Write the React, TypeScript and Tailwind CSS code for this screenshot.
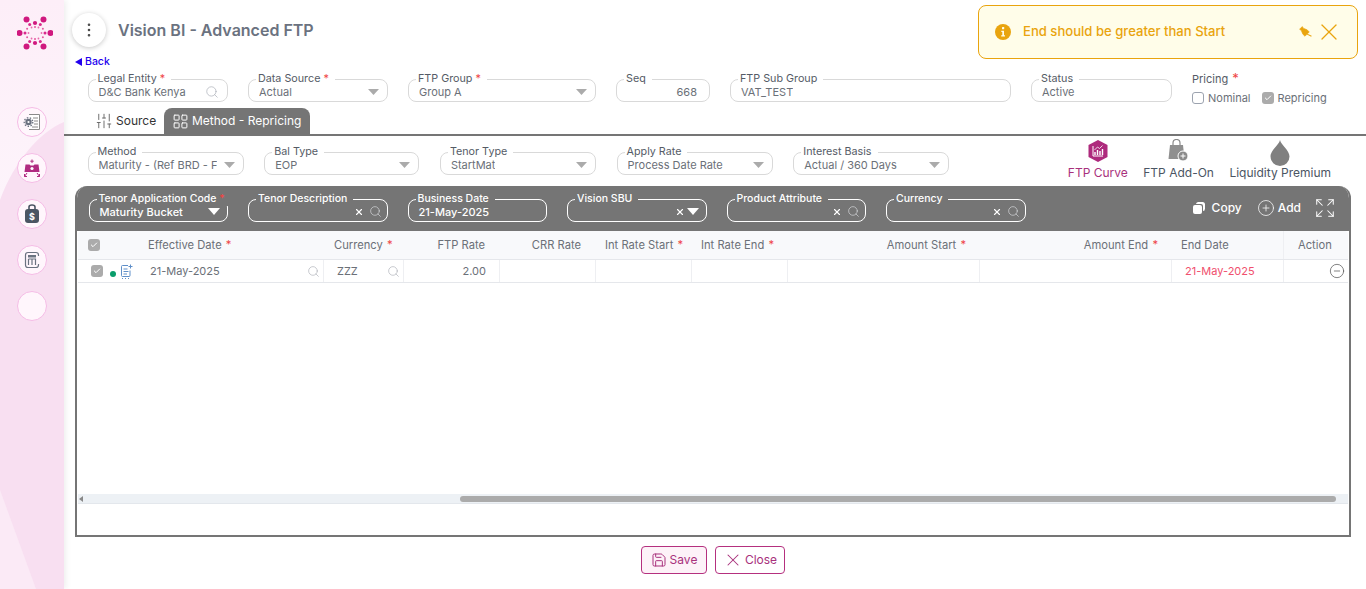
import React from "react";
import { Search, SlidersVertical, LayoutGrid, CirclePlus, Expand, Save, X, EllipsisVertical, CircleMinus, Check } from "lucide-react";

const Tri = ({ c = "#ababab", w = 11, h = 6 }: { c?: string; w?: number; h?: number }) => (
  <svg width={w} height={h} viewBox="0 0 10 5" preserveAspectRatio="none" className="shrink-0"><path d="M0 0h10L5 5z" fill={c} /></svg>
);

const Req = () => <span className="text-[#ef4444]"> *</span>;

function Field({ label, req, value, w, right, align }: { label: string; req?: boolean; value?: string; w: string; right?: React.ReactNode; align?: boolean }) {
  return (
    <fieldset className={`${w} h-[30px] min-w-0 shrink-0 rounded-lg border border-[#d9d9d9] pl-[10px] pr-[5px]`}>
      <legend className="ml-[-3px] pl-[2px] pr-[6px] text-[10.75px] leading-[14px] text-[#555b66] whitespace-nowrap">
        {label}
        {req && <Req />}
      </legend>
      <div className="flex h-[11px] items-center justify-between gap-1">
        <span className={`overflow-hidden whitespace-nowrap text-[11px] leading-[14px] text-[#6b7078] ${align ? "w-full pr-[7px] text-right" : ""}`}>{value}</span>
        {right && <span className="flex items-center pr-[3px]">{right}</span>}
      </div>
    </fieldset>
  );
}

function Filter({ label, req, value, right }: { label: string; req?: boolean; value?: string; right?: React.ReactNode }) {
  return (
    <fieldset className="h-[30px] w-[139.5px] min-w-0 shrink-0 rounded-lg border border-white pl-[10px] pr-[5px]">
      <legend className="ml-[-3px] pl-[2px] pr-[6px] text-[10.5px] font-medium leading-[14px] text-white whitespace-nowrap">
        {label}
        {req && <Req />}
      </legend>
      <div className="flex h-[11px] items-center justify-between">
        <span className="whitespace-nowrap text-[11px] font-medium leading-[14px] text-white">{value}</span>
        {right}
      </div>
    </fieldset>
  );
}

const SearchG = ({ c = "#a3a8b0", s = 13 }: { c?: string; s?: number }) => <Search size={s} color={c} strokeWidth={1.1} className="shrink-0" />;
const Cross = () => <X size={10} color="#fff" strokeWidth={2.75} className="shrink-0" />;

const Box = ({ on }: { on?: boolean }) =>
  on ? (
    <span className="flex h-3 w-3 shrink-0 items-center justify-center rounded-[3px] bg-[#ababab]"><Check size={8} color="#fff" strokeWidth={3} /></span>
  ) : (
    <span className="block h-3 w-3 shrink-0 rounded-[3px] border border-[#9ca3af] bg-white" />
  );

function Logo() {
  const big = [0, 58, 122, 180, 238, 302];
  const mid = [90, 270];
  const items: React.ReactNode[] = [];
  const c = 18;
  const pt = (deg: number, d: number) => [c + Math.cos((deg * Math.PI) / 180) * d, c + Math.sin((deg * Math.PI) / 180) * d];
  big.forEach((a) => {
    const [x, y] = pt(a, a === 0 || a === 180 ? 15.5 : 16);
    items.push(<circle key={"b" + a} cx={x} cy={y} r={3} fill="#d0187f" />);
    const [x2, y2] = pt(a, 10);
    items.push(<circle key={"s" + a} cx={x2} cy={y2} r={1.5} fill="#d92a8c" />);
    const [x3, y3] = pt(a, 6.5);
    items.push(<circle key={"t" + a} cx={x3} cy={y3} r={0.9} fill="#e86aae" />);
  });
  mid.forEach((a) => {
    const [x, y] = pt(a, 10);
    items.push(<circle key={"m" + a} cx={x} cy={y} r={2.1} fill="#d0187f" />);
    const [x2, y2] = pt(a, 6);
    items.push(<circle key={"n" + a} cx={x2} cy={y2} r={1} fill="#e4589f" />);
  });
  [29, 151, 209, 331].forEach((a) => {
    const [x, y] = pt(a, 9);
    items.push(<circle key={"r" + a} cx={x} cy={y} r={1} fill="#e4589f" />);
  });
  return <svg width="36" height="36" viewBox="0 0 36 36">{items}</svg>;
}

const SideBtn = ({ children }: { children?: React.ReactNode }) => (
  <div className="flex h-[30px] w-[30px] items-center justify-center rounded-full border border-[#f5bce6] bg-[#fff6fc]">{children}</div>
);

const icoDoc = (
  <svg width="18" height="18" viewBox="0 0 18 18">
    <path d="M6 1.500h10.500v15H6" fill="#fff" stroke="#8a8a8a" strokeWidth="1" />
    <path d="M10 5h5M11 8h4M11 11h4M9 14h6" stroke="#8a8a8a" strokeWidth="1" />
    <circle cx="5.500" cy="9" r="3.200" fill="#6b7280" />
    <circle cx="5.500" cy="9" r="4.300" fill="none" stroke="#6b7280" strokeWidth="1.300" strokeDasharray="1.500 1.500" />
    <circle cx="5.500" cy="9" r="1.100" fill="#fff" />
  </svg>
);
const icoFlow = (
  <svg width="18" height="19" viewBox="0 0 18 19">
    <path d="M9 0.500v3.500M7.300 2.200h3.400" stroke="#b02a80" strokeWidth="1" />
    <path d="M2.500 5.500h4l1 1h3l1-1h4l1 7.500h-15z" fill="#b02a80" />
    <circle cx="9" cy="9.500" r="1.600" fill="#fff" />
    <path d="M4 14l-2.500 3.500M1.500 15v2.500h2.500M14 14l2.500 3.500M16.500 15v2.500h-2.500" fill="none" stroke="#b02a80" strokeWidth="1" />
  </svg>
);
const icoBag = (
  <svg width="18" height="20" viewBox="0 0 18 20">
    <path d="M6 5V3q0-2 3-2t3 2v2" fill="none" stroke="#4b5563" strokeWidth="1.600" />
    <rect x="2" y="5" width="14" height="14" rx="3" fill="#4b5563" />
    <text x="9" y="15.500" textAnchor="middle" fontSize="9" fontWeight="700" fill="#fff" fontFamily="Inter">$</text>
  </svg>
);
const icoCalc = (
  <svg width="16" height="18" viewBox="0 0 16 18">
    <path d="M14.500 5V4q0-2.500-2.500-2.500H4Q1.500 1.500 1.500 4v10q0 2.500 2.500 2.500h8q2.500 0 2.500-2.500v-1" fill="none" stroke="#6b7280" strokeWidth="1.200" />
    <rect x="4" y="4" width="8" height="2.500" fill="#6b7280" />
    <path d="M4.500 8h7v6M4.500 8v6M8 8v6" fill="none" stroke="#6b7280" strokeWidth="1.200" />
  </svg>
);

function TopIcon({ label, active, children }: { label: string; active?: boolean; children: React.ReactNode }) {
  return (
    <div className="flex flex-col items-center">
      <div className="flex h-[24px] items-end">{children}</div>
      <span className={`mt-[3px] text-[12px] leading-[16px] whitespace-nowrap ${active ? "text-[#a8317c]" : "text-[#4b5563]"}`}>{label}</span>
    </div>
  );
}

const cols = ["w-[62px]", "w-[183px]", "w-[80px]", "w-[96px]", "w-[96px]", "w-[96px]", "w-[96px]", "w-[192px]", "w-[192px]", "w-[112px]", "w-[65px]"];

const HCell = ({ i, label, req, cls, children }: { i: number; label?: string; req?: boolean; cls?: string; children?: React.ReactNode }) => (
  <div className={`${cols[i]} flex shrink-0 items-center whitespace-nowrap text-[11.2px] text-[#6b7078] ${cls ?? ""}`}>
    {children}
    {label}
    {req && <span className="ml-[1px] text-[#ef4444]">&nbsp;*</span>}
  </div>
);

const BCell = ({ i, children, cls }: { i: number; children?: React.ReactNode; cls?: string }) => (
  <div className={`${cols[i]} flex shrink-0 items-center border-l border-[#eeeff2] text-[11px] text-[#6b7078] ${cls ?? ""}`}>{children}</div>
);

export default function App() {
  return (
    <div className="relative flex h-[589px] w-[1366px] overflow-hidden bg-white font-['Inter',sans-serif]">
      <aside className="relative z-10 flex w-[64px] shrink-0 flex-col items-center bg-[#f8dff1] shadow-[2px_0_6px_rgba(0,0,0,0.07)]">
        <svg className="absolute inset-0" width="64" height="589" viewBox="0 0 64 589">
          <defs>
            <linearGradient id="t" x1="0" y1="0" x2="0" y2="1">
              <stop offset="0" stopColor="#fdeef8" />
              <stop offset="1" stopColor="#fdf4fb" />
            </linearGradient>
          </defs>
          <path d="M0 0H64V122C40 132 15 160 0 200Z" fill="url(#t)" />
          <path d="M0 490L36 589H0Z" fill="#fbeaf6" />
        </svg>
        <div className="relative ml-[5px] mt-[15px]"><Logo /></div>
        <div className="relative mt-[56px] flex flex-col gap-[16px]">
          <SideBtn>{icoDoc}</SideBtn>
          <SideBtn>{icoFlow}</SideBtn>
          <SideBtn>{icoBag}</SideBtn>
          <SideBtn>{icoCalc}</SideBtn>
          <SideBtn />
        </div>
      </aside>

      <main className="flex min-w-0 flex-1 flex-col">
        <header className="flex h-[55px] shrink-0 items-center pl-[8px] pt-[5px]">
          <div className="flex h-[34px] w-[34px] items-center justify-center rounded-full bg-white shadow-[0_1px_5px_rgba(0,0,0,0.22)]">
            <EllipsisVertical size={18} color="#444" strokeWidth={1.5} />
          </div>
          <h1 className="ml-[12px] text-[16px] font-semibold text-[#6b7280]">Vision BI - Advanced FTP</h1>
        </header>

        <a className="ml-[11px] flex h-[14px] items-center gap-[3px] text-[10.5px] font-medium leading-[12px] text-[#2200ee]">
          <svg width="7" height="8" viewBox="0 0 7 8"><path d="M7 0v8L0 4z" fill="#2200ee" /></svg>
          Back
        </a>

        <div className="ml-[23.5px] mt-[3px] flex shrink-0 items-start gap-[20px]">
          <Field w="w-[140.5px]" label="Legal Entity" req value="D&C Bank Kenya" right={<SearchG s={14} />} />
          <Field w="w-[140px]" label="Data Source" req value="Actual" right={<Tri />} />
          <Field w="w-[188px]" label="FTP Group" req value="Group A" right={<Tri />} />
          <Field w="w-[94px]" label="Seq" value="668" align />
          <Field w="w-[281px]" label="FTP Sub Group" value="VAT_TEST" />
          <Field w="w-[141px]" label="Status" value="Active" />
          <div className="-mt-[1px] flex h-[34px] flex-col justify-between">
            <div className="text-[11px] leading-[14px] text-[#555b66]">Pricing<span className="ml-[4px] text-[13px] text-[#ef4444]">*</span></div>
            <div className="flex items-center text-[11px] leading-[14px] text-[#6b7078]">
              <Box /><span className="ml-[4px]">Nominal</span>
              <span className="ml-[11px]"><Box on /></span><span className="ml-[4px]">Repricing</span>
            </div>
          </div>
        </div>

        <div className="mt-[3px] flex h-[28px] shrink-0 items-stretch border-b-2 border-[#757575] pl-[31px]">
          <div className="flex w-[62px] items-center gap-[3px] text-[12px] text-[#333]">
            <SlidersVertical size={18} color="#666" strokeWidth={1.25} />
            Source
          </div>
          <div className="ml-[7px] flex w-[146px] items-center gap-[3px] rounded-t-lg bg-[#757575] pl-[8px] text-[12px] text-white">
            <LayoutGrid size={17} color="#fff" strokeWidth={1.4} />
            Method - Repricing
          </div>
        </div>

        <div className="relative flex h-[50px] shrink-0 items-start pl-[23.5px] pr-[35px]">
          <div className="mt-[9px] flex gap-[20.7px]">
            <Field w="w-[156px]" label="Method" value="Maturity - (Ref BRD - F" right={<Tri />} />
            <Field w="w-[155px]" label="Bal Type" value="EOP" right={<Tri />} />
            <Field w="w-[156px]" label="Tenor Type" value="StartMat" right={<Tri />} />
            <Field w="w-[156px]" label="Apply Rate" value="Process Date Rate" right={<Tri />} />
            <Field w="w-[156px]" label="Interest Basis" value="Actual / 360 Days" right={<Tri />} />
          </div>
          <div className="ml-auto mt-[2px] flex gap-[15.5px]">
            <TopIcon label="FTP Curve" active>
              <svg width="20" height="22" viewBox="0 0 20 22">
                <path d="M10 0l9.500 5v12L10 22 .5 17V5z" fill="#ae2a7d" />
                <path d="M5 6v10h10" fill="none" stroke="#fff" strokeWidth="1" />
                <path d="M7 15v-3M9.500 15v-5M12 15v-4M14.500 15v-6" stroke="#fff" strokeWidth="1.400" />
                <path d="M6.500 10l3-3 2 1.500 3-3" fill="none" stroke="#fff" strokeWidth=".8" />
              </svg>
            </TopIcon>
            <TopIcon label="FTP Add-On">
              <svg width="21" height="23" viewBox="0 0 21 23">
                <path d="M5 8V4q0-3.500 3.500-3.500T12 4v4" fill="none" stroke="#8a8a8a" strokeWidth="1.200" />
                <path d="M2 6h13l1.500 14H0.500z" fill="#8f8f8f" />
                <circle cx="15" cy="17" r="5" fill="#8a8a8a" stroke="#fff" strokeWidth="1" />
                <path d="M12.500 17h5M15 14.500v5" stroke="#fff" strokeWidth="1" />
              </svg>
            </TopIcon>
            <TopIcon label="Liquidity Premium">
              <svg width="20" height="26" viewBox="0 0 20 26" className="-mb-[4px]">
                <path d="M10 0c1 5 9.500 10 9.500 16.500a9.500 9.500 0 0 1-19 0C.5 10 9 5 10 0z" fill="#808080" />
              </svg>
            </TopIcon>
          </div>
        </div>

        <section className="ml-[11px] mr-[15px] flex h-[351px] shrink-0 flex-col overflow-hidden rounded-t-[12px] border-2 border-t-0 border-[#757575] bg-white">
          <div className="flex h-[45px] shrink-0 items-start bg-[#757575] pl-[11.5px] pr-[13px]">
            <div className="mt-[6px] flex gap-[20px]">
              <Filter label="Tenor Application Code" req value="Maturity Bucket" right={<span className="pr-[2px]"><Tri c="#fff" w={12} h={7} /></span>} />
              <Filter label="Tenor Description" right={<span className="flex items-center gap-[5px]"><Cross /><SearchG c="#e5e7eb" /></span>} />
              <Filter label="Business Date" value="21-May-2025" />
              <Filter label="Vision SBU" right={<span className="flex items-center gap-[2px] pr-[2px]"><Cross /><Tri c="#fff" w={12} h={7} /></span>} />
              <Filter label="Product Attribute" right={<span className="flex items-center gap-[5px]"><Cross /><SearchG c="#e5e7eb" /></span>} />
              <Filter label="Currency" right={<span className="flex items-center gap-[5px]"><Cross /><SearchG c="#e5e7eb" /></span>} />
            </div>
            <div className="ml-auto mt-[11px] flex items-center text-[12px] font-medium text-white">
              <svg width="14" height="14" viewBox="0 0 14 14">
                <path d="M4 3.500Q4 1 6.500 1h4Q13 1 13 3.500v4Q13 10 11 10V5Q11 3 9 3H4z" fill="#fff" />
                <rect x="1" y="4" width="9" height="9" rx="2" fill="#fff" />
              </svg>
              <span className="ml-[6px]">Copy</span>
              <CirclePlus size={18} color="#fff" strokeWidth={1} className="ml-[15px]" />
              <span className="ml-[3px]">Add</span>
              <Expand size={22} color="#fff" strokeWidth={1.1} className="ml-[13px]" />
            </div>
          </div>

          <div className="mx-[1px] flex h-[29px] shrink-0 rounded-t-sm border-b border-[#e5e7eb] bg-[#f8f9fb]">
            <HCell i={0} cls="pl-[10px]"><Box on /></HCell>
            <HCell i={1} cls="pl-[8px]" label="Effective Date" req />
            <HCell i={2} cls="pl-[11px]" label="Currency" req />
            <HCell i={3} cls="justify-end pr-[14px]" label="FTP Rate" />
            <HCell i={4} cls="justify-end pr-[14px]" label="CRR Rate" />
            <HCell i={5} cls="pl-[10px]" label="Int Rate Start" req />
            <HCell i={6} cls="pl-[10px]" label="Int Rate End" req />
            <HCell i={7} cls="justify-end pr-[13px]" label="Amount Start" req />
            <HCell i={8} cls="justify-end pr-[13px]" label="Amount End" req />
            <HCell i={9} cls="pl-[10px]" label="End Date" />
            <HCell i={10} cls="border-l border-[#eeeff2] pl-[14px]" label="Action" />
          </div>

          <div className="mx-[1px] flex h-[23px] shrink-0 border-b border-[#e5e7eb]">
            <BCell i={0} cls="border-l-0 pl-[13px]">
              <Box on />
              <span className="ml-[7px] mt-[5px] block h-[6px] w-[6px] rounded-full bg-[#0a9d6b]" />
              <svg width="13" height="15" viewBox="0 0 13 15" className="ml-[4px]" fill="none" stroke="#5f8fc9" strokeWidth="1">
                <path d="M8 1.500H2.500a1 1 0 0 0-1 1v9a1 1 0 0 0 1 1h6.500a1 1 0 0 0 1-1v-5" />
                <path d="M3.500 5h4M3.500 7.500h5M3.500 10h3.500M10.500 .5v4M8.500 2.500h4" />
                <path d="M2 14.500h1M5 14.500h1M8 14.500h1" />
              </svg>
            </BCell>
            <BCell i={1} cls="justify-between border-l-0 pl-[10px] pr-[3px]">21-May-2025<SearchG s={13} /></BCell>
            <BCell i={2} cls="justify-between pl-[13px] pr-[3px]">ZZZ<SearchG s={13} /></BCell>
            <BCell i={3} cls="justify-end pr-[13px]">2.00</BCell>
            <BCell i={4} />
            <BCell i={5} />
            <BCell i={6} />
            <BCell i={7} />
            <BCell i={8} />
            <BCell i={9} cls="pl-[13px] text-[#f0506e]">21-May-2025</BCell>
            <BCell i={10} cls="justify-end pr-[3px]"><CircleMinus size={16} color="#555" strokeWidth={1.1} /></BCell>
          </div>

          <div className="flex-1" />

          <div className="mx-[1px] mb-[31px] flex h-[10px] shrink-0 items-center border-b border-[#e3e7ec] bg-[#edf1f5] pl-[1px]">
            <svg width="4" height="6" viewBox="0 0 4 6"><path d="M4 0v6L0 3z" fill="#888" /></svg>
            <div className="ml-[377px] h-[6px] w-[876px] rounded-full bg-[#ababab]" />
          </div>
        </section>

        <div className="ml-[577px] mt-[9px] flex gap-[8px] text-[12px] text-[#a8317c]">
          <button className="flex h-[28px] w-[66px] items-center justify-center gap-[3px] rounded-[4px] border border-[#b5307f] bg-[#fdf2f8]">
            <Save size={16} strokeWidth={1.5} />Save
          </button>
          <button className="flex h-[28px] w-[70px] items-center justify-center gap-[2px] rounded-[4px] border border-[#b5307f] bg-white">
            <X size={20} strokeWidth={1.25} />Close
          </button>
        </div>
      </main>

      <div className="absolute left-[978px] top-[5px] z-20 flex h-[54px] w-[380px] items-center rounded-lg border border-[#e9a40e] bg-[#fffde9] pl-[16px] text-[13.1px] font-medium text-[#e9a40e]">
        <svg width="16" height="16" viewBox="0 0 16 16" className="shrink-0">
          <circle cx="8" cy="8" r="8" fill="#e9a40e" />
          <rect x="7" y="3" width="2.200" height="2.200" rx=".5" fill="#fffde9" />
          <path d="M6.300 6.800H9v4.400h1v1.300H6.200v-1.300h1.100V8.100h-1z" fill="#fffde9" />
        </svg>
        <span className="ml-[12px] whitespace-nowrap">End should be greater than Start</span>
        <svg width="13" height="13" viewBox="0 0 12 12" className="ml-[74px] shrink-0" fill="#e9a40e" stroke="#e9a40e" strokeWidth=".5">
          <polygon points="0.500,3 3,0.500 4,2 7.500,3.500 9.500,5.500 5.500,9.500 3.500,7.500 2,4" />
          <path d="M7.500 7.500l4 2" strokeWidth="1" fill="none" />
        </svg>
        <X size={28} strokeWidth={1.1} className="ml-[3px] shrink-0" />
      </div>
    </div>
  );
}
